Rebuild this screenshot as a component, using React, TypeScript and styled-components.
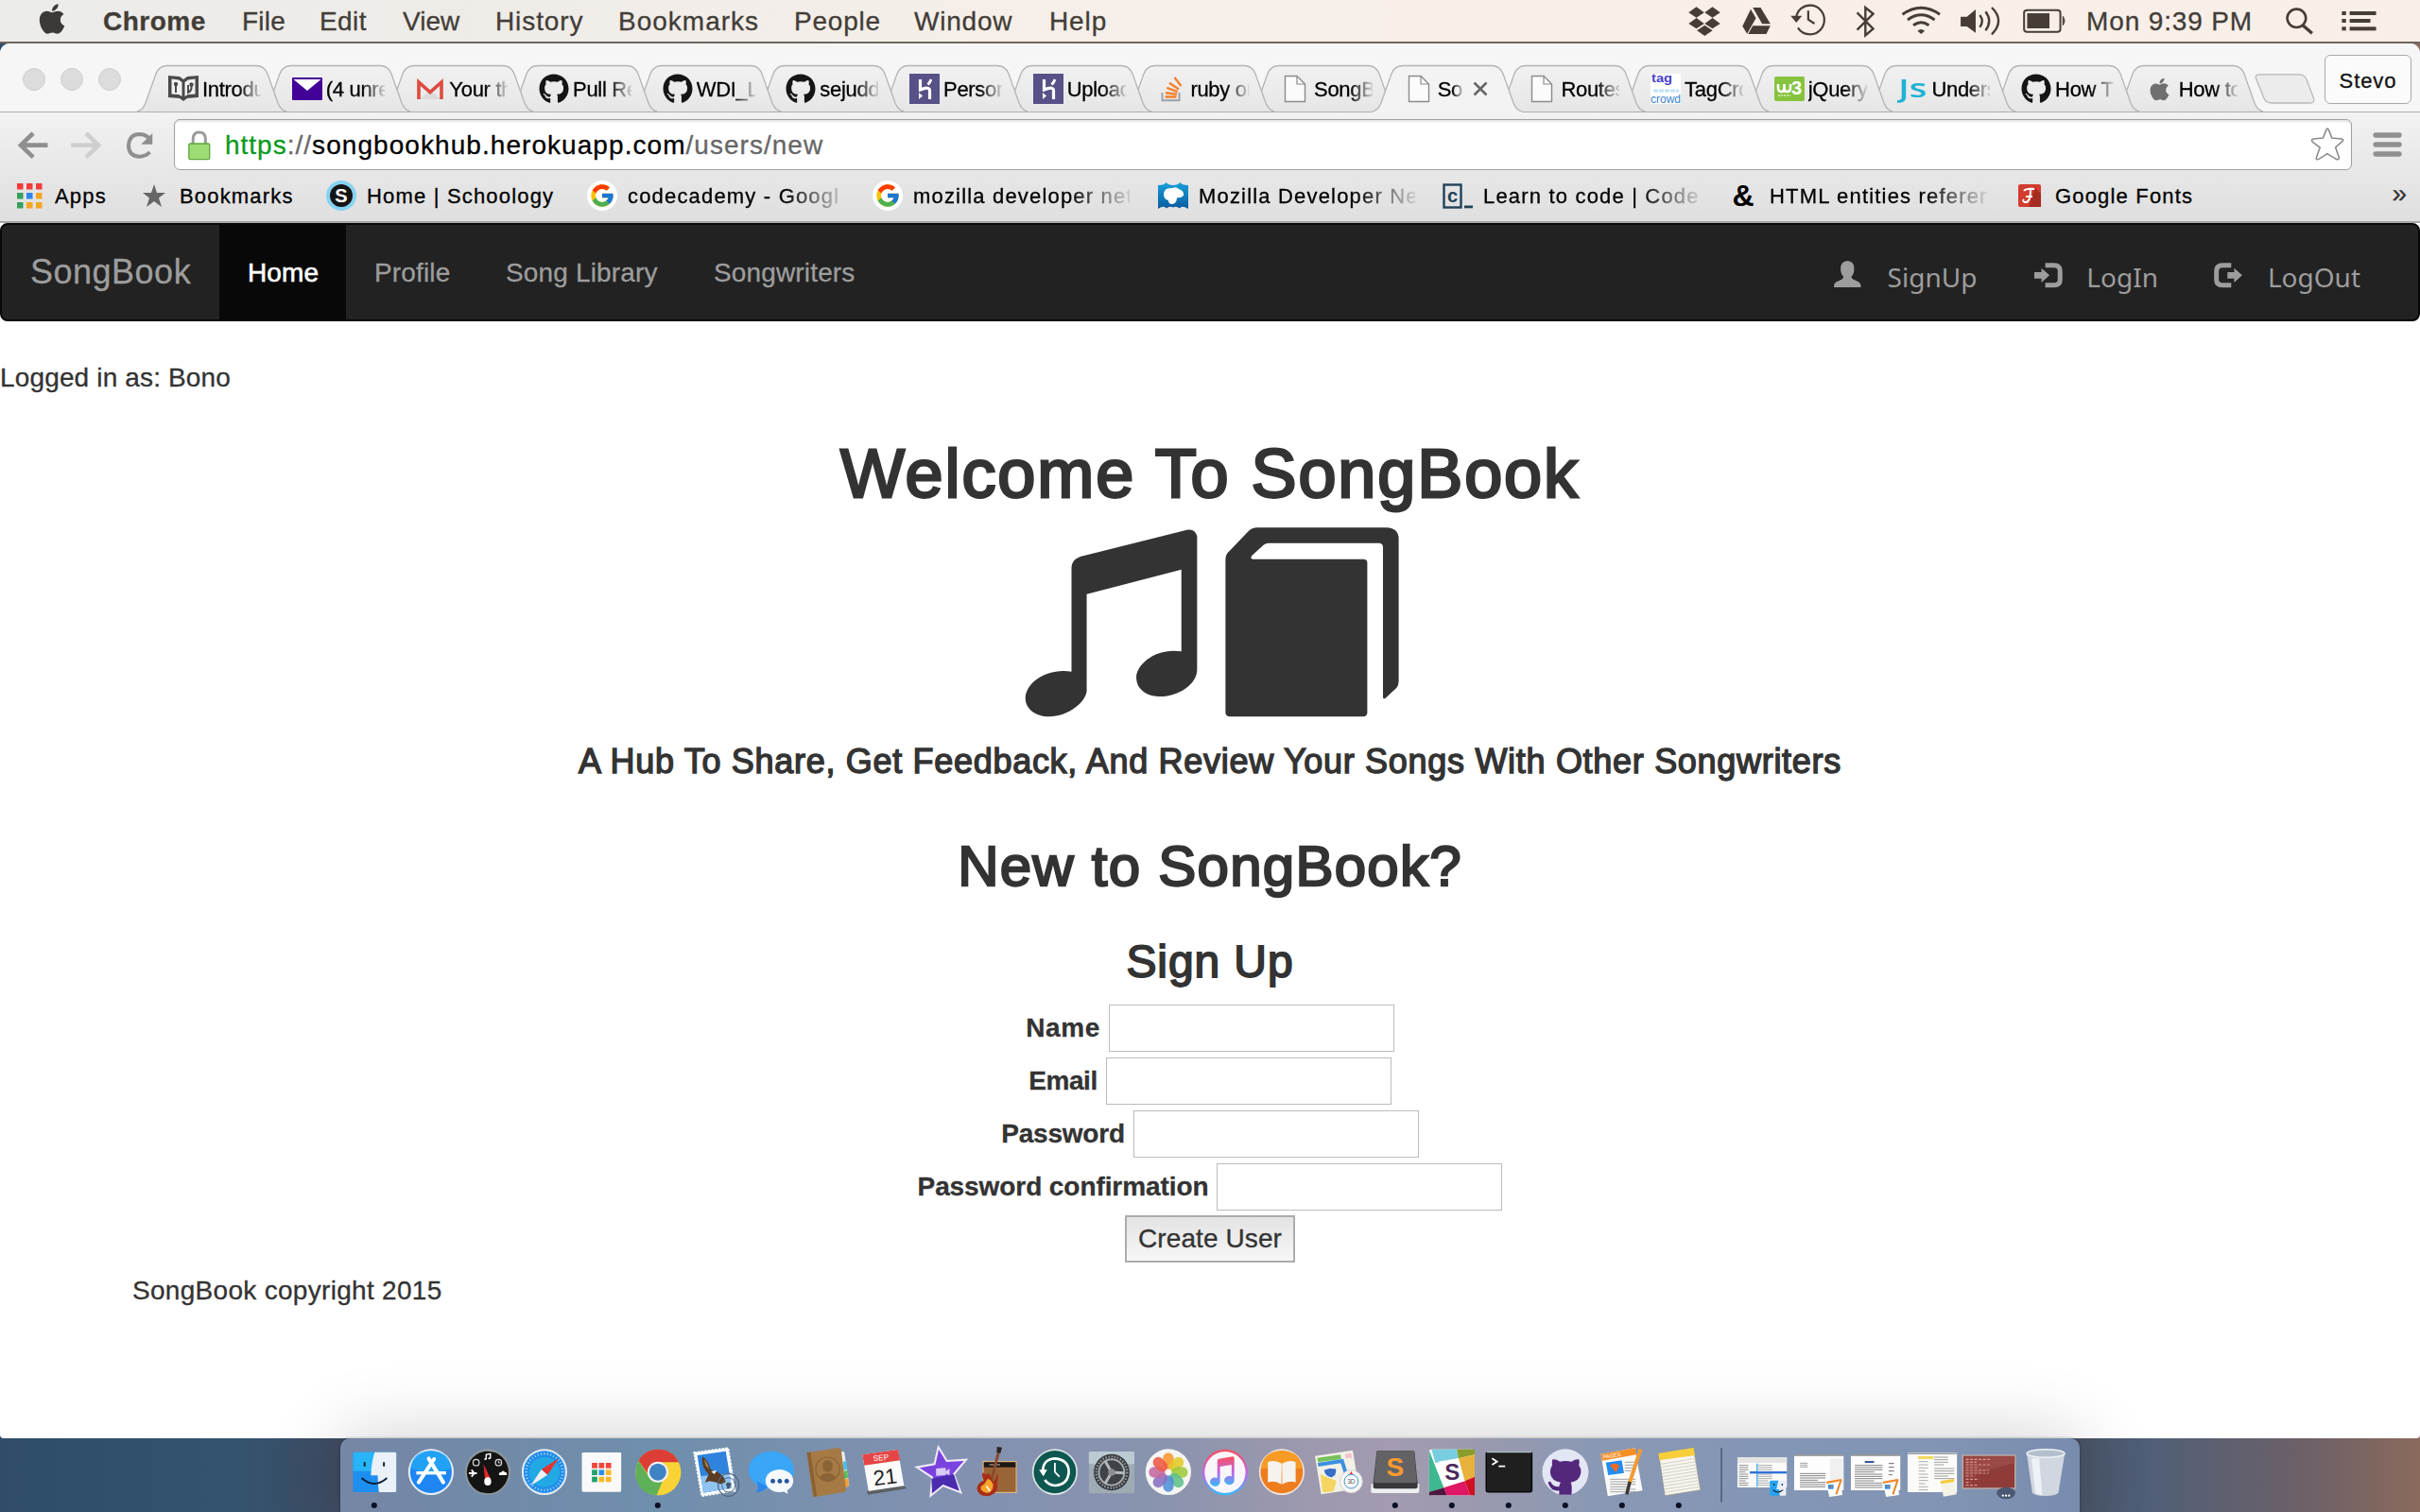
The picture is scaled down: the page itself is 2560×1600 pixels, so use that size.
import React from "react";
import styled, { createGlobalStyle, css } from "styled-components";
import { FaApple, FaGithub } from "react-icons/fa";
import { FcGoogle } from "react-icons/fc";

const sans = `"Liberation Sans", Arial, Helvetica, sans-serif`;

const Global = createGlobalStyle`
  * { box-sizing: border-box; }
  body { margin: 0; background: #3a5068; font-family: ${sans}; color: #333; -webkit-text-stroke-width: 0.3px; }
`;

/* ---------- shared drawing helpers ---------- */

const Drawing = styled.svg`
  display: block;
  flex: none;
  overflow: visible;
  & * {
    vector-effect: non-scaling-stroke;
  }
`;

type ArtProps = {
  x: number;
  y: number;
  w: number;
  h: number;
  kx: number;
  ky?: number;
  children: React.ReactNode;
};

const Art = ({ x, y, w, h, kx, ky = 3, children }: ArtProps) => (
  <Drawing width={w / kx} height={h / ky} viewBox={`${x} ${y} ${w} ${h}`} preserveAspectRatio="none">
    {children}
  </Drawing>
);

type LabelProps = {
  x: number;
  y: number;
  size: number;
  fill: string;
  k?: number;
  weight?: number;
  rotate?: number;
  anchor?: "start" | "middle";
  family?: string;
  children: React.ReactNode;
};

const Label = ({ x, y, size, fill, k = 0.8167, weight = 400, rotate = 0, anchor = "middle", family = sans, children }: LabelProps) => (
  <text
    transform={`translate(${x} ${y}) scale(${k} 1) rotate(${rotate})`}
    fontSize={size}
    fill={fill}
    fontWeight={weight}
    textAnchor={anchor}
    fontFamily={family}
  >
    {children}
  </text>
);

/* ---------- screen ---------- */

const Screen = styled.div`
  width: 2560px;
  height: 1600px;
  overflow: hidden;
  display: flex;
  flex-direction: column;
  background: linear-gradient(90deg, #2f4d68 0, #33536e 250px, #3f4c62 360px, #4a5468 2200px, #4f5f78 2270px, #6b6068 2430px, #8a6a5c 2560px);
`;

/* ---------- macOS menu bar ---------- */

const MenuBar = styled.header`
  flex: none;
  height: 46px;
  display: flex;
  align-items: flex-start;
  background: linear-gradient(90deg, #ececea 0, #efece8 500px, #f6efe9 1100px, #f8efe9 1500px, #f8efe9);
  border-bottom: 2px solid #70655d;
  color: #423d37;
`;

const AppleSlot = styled.div`
  width: 109px;
  height: 44px;
  padding: 2px 0 0 37px;
  font-size: 36px;
  color: #3c3a36;
`;

const MenuItem = styled.span<{ $w: number; $ls: number; $bold?: boolean }>`
  width: ${(p) => p.$w}px;
  font-size: 28px;
  line-height: 45px;
  letter-spacing: ${(p) => p.$ls}px;
  font-weight: ${(p) => (p.$bold ? 700 : 400)};
  white-space: nowrap;
`;

const StatusArea = styled.div`
  display: flex;
  margin-left: auto;
`;

const Clock = styled.span`
  width: 206px;
  padding-left: 11px;
  font-size: 28px;
  line-height: 45px;
  letter-spacing: 0.85px;
  white-space: nowrap;
`;

const MENUS: [string, number, number][] = [
  ["File", 82, 0.2],
  ["Edit", 88, 0.4],
  ["View", 98, 0],
  ["History", 130, 0.9],
  ["Bookmarks", 186, 1],
  ["People", 127, 0.8],
  ["Window", 143, 0.8],
  ["Help", 80, 0.9],
];

const INK = "#463d36";
const MX = 1.8235;

const StatusIcons = () => (
  <>
    <Art x={140} y={0} w={95} h={132} kx={MX}>
      {[[172, 40], [203, 40], [172, 75], [203, 75]].map(([cx, cy]) => (
        <path key={`${cx}${cy}`} d={`M${cx - 15} ${cy} L${cx} ${cy - 18} L${cx + 15} ${cy} L${cx} ${cy + 16}Z`} fill={INK} />
      ))}
      <path d="M173 97 L188 80 L203 97 L188 114Z" fill={INK} />
    </Art>
    <Art x={235} y={0} w={105} h={132} kx={MX}>
      <path d="M277 29 L287 58 L270 107 L261 83Z M281 24 H296 L315 76 H299Z M281 82 H315 L307 108 H272Z" fill={INK} />
    </Art>
    <Art x={340} y={0} w={110} h={132} kx={MX}>
      <path d="M366 54 C368 30 380 17 393 17 C408 17 420 38 420 63 C420 88 408 109 393 109 C383 109 374 101 369 88" fill="none" stroke={INK} strokeWidth="2.2" />
      <path d="M355 50 H377 L366 72Z" fill={INK} />
      <path d="M389 34 V62 L401 75" fill="none" stroke={INK} strokeWidth="2.2" />
    </Art>
    <Art x={450} y={0} w={100} h={132} kx={MX}>
      <path d="M482 40 L513 91 L498 112 V24 L513 44 L482 95" fill="none" stroke={INK} strokeWidth="2.4" />
    </Art>
    <Art x={550} y={0} w={110} h={132} kx={MX}>
      <path d="M571 46 Q607 4 643 46 M581 63 Q607 32 633 63 M592 80 Q607 62 622 80" fill="none" stroke={INK} strokeWidth="3" />
      <path d="M600 98 Q607 88 614 98 L607 108Z" fill={INK} />
    </Art>
    <Art x={660} y={0} w={120} h={132} kx={MX}>
      <path d="M682 53 H694 L711 30 V104 L694 84 H682Z" fill={INK} />
      <path d="M719 48 Q728 67 719 86 M730 37 Q744 67 730 97 M742 24 Q768 65 742 109" fill="none" stroke={INK} strokeWidth="2.4" />
    </Art>
    <Art x={780} y={0} w={125} h={132} kx={MX}>
      <rect x="804" y="32" width="70" height="69" rx="6" ry="8" fill="none" stroke={INK} strokeWidth="2" />
      <rect x="810" y="42" width="43" height="48" fill={INK} />
      <path d="M879 52 Q885 66 879 80Z" fill={INK} stroke={INK} />
    </Art>
    <Clock>Mon 9:39 PM</Clock>
    <Art x={1280} y={0} w={110} h={132} kx={MX}>
      <ellipse cx="1330" cy="58" rx="18" ry="29" fill="none" stroke={INK} strokeWidth="2.6" />
      <path d="M1342 80 L1360 106" stroke={INK} strokeWidth="3.4" />
    </Art>
    <Art x={1390} y={0} w={178} h={132} kx={MX}>
      {[36, 60, 85].map((y, i) => (
        <g key={y} fill={INK}>
          <rect x="1418" y={y} width="8" height="12" />
          <rect x="1433" y={y} width={i === 1 ? 40 : 51} height="12" />
        </g>
      ))}
    </Art>
  </>
);

/* ---------- browser window ---------- */

const Browser = styled.div`
  flex: none;
  height: 1476px;
  display: flex;
  flex-direction: column;
  background: #fff;
  border-radius: 10px 10px 4px 4px;
  overflow: hidden;
`;

const TabStrip = styled.div`
  position: relative;
  z-index: 1;
  flex: none;
  height: 72px;
  display: flex;
  background: #f6f6f6;
  isolation: isolate;
`;

const Lights = styled.div`
  display: flex;
  gap: 16px;
  width: 145px;
  flex: none;
  padding: 26px 0 0 24px;
`;

const Light = styled.i`
  width: 24px;
  height: 24px;
  border-radius: 50%;
  background: #dcdcdc;
  border: 1px solid #cfcfcf;
`;

const TabBox = styled.div<{ $z: number; $first?: boolean }>`
  display: grid;
  flex: none;
  width: 158px;
  height: 49px;
  margin-top: 23px;
  margin-left: ${(p) => (p.$first ? 0 : -27.33)}px;
  z-index: ${(p) => p.$z};
  & > * {
    grid-area: 1 / 1;
  }
`;

const TabBody = styled.div`
  display: flex;
  align-items: center;
  padding: 1px 0 0 33px;
`;

const TabIcon = styled.span`
  width: 32px;
  height: 32px;
  flex: none;
  display: flex;
  align-items: center;
  justify-content: center;
  font-size: 32px;
  color: #161414;
`;

const TabTitle = styled.span<{ $short?: boolean }>`
  width: ${(p) => (p.$short ? 27 : 62)}px;
  margin-left: 4px;
  overflow: hidden;
  white-space: nowrap;
  font-size: 22px;
  line-height: 33px;
  letter-spacing: -0.3px;
  color: #000;
  mask-image: linear-gradient(90deg, #000 ${(p) => (p.$short ? 15 : 38)}px, rgba(0, 0, 0, 0.1) 100%);
`;

const TabClose = styled.span`
  margin-left: 10px;
  display: flex;
`;

const TabShape = ({ active }: { active?: boolean }) => (
  <Drawing width="158" height="49" viewBox="0 0 158 49">
    <defs>
      <linearGradient id="tabfill" x1="0" y1="0" x2="0" y2="1">
        <stop offset="0" stopColor="#f1f1f1" />
        <stop offset="1" stopColor="#e6e6e6" />
      </linearGradient>
    </defs>
    <path
      d={`M0 ${active ? 50.5 : 49} V48.8 C5 48 7 45 9 40 L20 9 C22.500 3 26 .5 32 .5 H126 C132 .5 135.500 3 138 9 L149 40 C151 45 153 48 158 48.800 V${active ? 50.5 : 49}Z`}
      fill={active ? "#f3f3f3" : "url(#tabfill)"}
    />
    <path d="M0 48.800 C5 48 7 45 9 40 L20 9 C22.500 3 26 .5 32 .5 H126 C132 .5 135.500 3 138 9 L149 40 C151 45 153 48 158 48.800" fill="none" stroke="#b4b4b4" strokeWidth="1.3" />
  </Drawing>
);

const DocIcon = () => (
  <svg width="32" height="32" viewBox="0 0 32 32">
    <path d="M5.500 2.500 H18 L26.500 11 V29.500 H5.500Z" fill="#fbfbfb" stroke="#8b8b8b" strokeWidth="1.4" />
    <path d="M18 2.500 V11 H26.500" fill="none" stroke="#8b8b8b" strokeWidth="1.2" />
  </svg>
);

const BookBranchIcon = () => (
  <svg width="32" height="32" viewBox="0 0 32 32">
    <path d="M0 2 L12 3 L16 6 L20 3 L32 2 V25 L20 26 L16 29 L12 26 L0 25Z" fill="#4a4a4a" />
    <path d="M3.500 5.500 L11 6.500 L14.500 9 V24 L11 22 L3.500 21.500Z M28.500 5.500 L21 6.500 L17.500 9 V24 L21 22 L28.500 21.500Z" fill="#f2f2f2" />
    <path d="M8 11 V20 M21 12 V20 Q25 18 24.500 13" fill="none" stroke="#4a4a4a" strokeWidth="2" />
    <circle cx="8" cy="11" r="2.200" fill="#4a4a4a" />
    <circle cx="24.500" cy="11.500" r="2.200" fill="#4a4a4a" />
  </svg>
);

const MailIcon = () => (
  <svg width="32" height="32" viewBox="0 0 32 32">
    <rect y="4" width="32" height="24" rx="1" fill="#430297" />
    <path d="M1.500 6 H30.500 L16 18Z" fill="#fff" />
  </svg>
);

const GmailIcon = () => (
  <svg width="32" height="32" viewBox="0 0 32 32">
    <rect x="3" y="6" width="26" height="21" fill="#ececec" />
    <path d="M4.500 27 L16 17 L27.500 27Z" fill="#dcdcdc" />
    <path d="M4 27 V9 L16 19.500 L28 9 V27" fill="none" stroke="#dd4b3e" strokeWidth="3.600" />
  </svg>
);

const HerokuIcon = () => (
  <svg width="32" height="32" viewBox="0 0 32 32">
    <rect width="32" height="32" fill="#565287" />
    <path d="M11.500 6 V17 Q21.500 13 21.500 18 V27" fill="none" stroke="#fff" strokeWidth="3.200" />
    <path d="M10 20 L14 23.500 L10 27Z" fill="#fff" />
    <path d="M23 6 Q22 9 19.500 11.500" fill="none" stroke="#fff" strokeWidth="2.800" />
  </svg>
);

const StackIcon = () => (
  <svg width="32" height="32" viewBox="0 0 32 32" fill="none">
    <path d="M6.500 20 V28.200 H24.500 V20" stroke="#9aa0a8" strokeWidth="1.900" />
    <path d="M9.500 24.500 H21.500 M10 20.200 L22 21.800 M11.300 14.800 L22.700 19.200 M14 9.800 L24 16.600 M19.500 4 L26.500 13" stroke="#f4802a" strokeWidth="2.400" />
  </svg>
);

const TagCrowdIcon = () => (
  <svg width="32" height="32" viewBox="0 0 32 32">
    <rect width="32" height="32" fill="#fff" />
    <text x="1" y="9" fontSize="13" fontWeight="700" fill="#4a3fd0" fontFamily={sans} textLength="22" lengthAdjust="spacingAndGlyphs">tag</text>
    <path d="M3 18 H30" stroke="#bfe0f5" strokeWidth="3" strokeDasharray="5 1" />
    <text x="0" y="31" fontSize="12" fill="#3e86cf" fontFamily={sans} textLength="32" lengthAdjust="spacingAndGlyphs">crowd</text>
  </svg>
);

const W3Icon = () => (
  <svg width="32" height="32" viewBox="0 0 32 32">
    <rect y="3" width="32" height="26" rx="2" fill="#86c440" />
    <path d="M4 11 V15 Q4 19 7.500 19 Q10.500 19 10.500 15 V11 V15 Q10.500 19 13.500 19 Q17 19 17 15 V11" fill="none" stroke="#fff" strokeWidth="2.600" />
    <text x="18" y="22" fontSize="20" fontWeight="700" fill="#fff" fontFamily={sans}>3</text>
    <path d="M4 23 H17" stroke="#c8e5a5" strokeWidth="2" strokeDasharray="2 1" />
  </svg>
);

const JsIcon = () => (
  <svg width="32" height="32" viewBox="0 0 32 32">
    <text x="1" y="25" fontSize="27" fontWeight="600" fill="#1fb3d6" fontFamily={`"Open Sans", sans-serif`} textLength="30" lengthAdjust="spacingAndGlyphs">Js</text>
  </svg>
);

const CrossIcon = () => (
  <svg width="16" height="16" viewBox="0 0 16 16">
    <path d="M1.500 1.500 L14.500 14.500 M14.500 1.500 L1.500 14.500" stroke="#666" strokeWidth="2.600" />
  </svg>
);

const GreyApple = styled(FaApple)`
  color: #6f6f6f;
  font-size: 27px;
`;

const TABS: { icon: React.ReactNode; title: string; active?: boolean }[] = [
  { icon: <BookBranchIcon />, title: "Introdu" },
  { icon: <MailIcon />, title: "(4 unre" },
  { icon: <GmailIcon />, title: "Your th" },
  { icon: <FaGithub />, title: "Pull Re" },
  { icon: <FaGithub />, title: "WDI_L" },
  { icon: <FaGithub />, title: "sejudd" },
  { icon: <HerokuIcon />, title: "Person" },
  { icon: <HerokuIcon />, title: "Upload" },
  { icon: <StackIcon />, title: "ruby on" },
  { icon: <DocIcon />, title: "SongB" },
  { icon: <DocIcon />, title: "So", active: true },
  { icon: <DocIcon />, title: "Routes" },
  { icon: <TagCrowdIcon />, title: "TagCro" },
  { icon: <W3Icon />, title: "jQuery" },
  { icon: <JsIcon />, title: "Unders" },
  { icon: <FaGithub />, title: "How T" },
  { icon: <GreyApple />, title: "How to" },
];

const NewTab = styled.div`
  flex: none;
  margin: 32px 0 0 -9px;
`;

const ProfileButton = styled.button`
  width: 92px;
  height: 52px;
  margin: 12px 9px 0 auto;
  padding: 4px 0 0;
  border: 1.5px solid #a8a8a8;
  border-radius: 6px;
  background: #fbfbfb;
  font: 22px ${sans};
  letter-spacing: 0.9px;
  color: #111;
  display: flex;
  align-items: center;
  justify-content: center;
  -webkit-text-stroke-width: 0.3px;
`;

const Toolbar = styled.div`
  flex: none;
  height: 118px;
  display: flex;
  flex-direction: column;
  border-top: 1px solid #adadad;
  border-bottom: 2px solid #a8a8a8;
  background: linear-gradient(#f2f2f2, #e8e8e8 50%, #dfdfdf);
`;

const AddressRow = styled.div`
  display: flex;
  height: 61px;
  padding-top: 7px;
`;

const AddressBar = styled.div`
  width: 2304px;
  height: 54px;
  display: flex;
  align-items: center;
  border: 1.5px solid #a0a0a0;
  border-radius: 6px;
  background: #fff;
  box-shadow: inset 0 2px 2px rgba(0, 0, 0, 0.1);
`;

const Url = styled.div`
  flex: 1;
  padding-top: 2px;
  font-size: 28px;
  line-height: 48px;
  letter-spacing: 1.02px;
  white-space: nowrap;
  color: #676767;
`;

const Scheme = styled.span`
  color: #0a9a1c;
`;

const Host = styled.span`
  color: #000;
  letter-spacing: 1.06px;
`;

const BookmarkRow = styled.div`
  display: flex;
  align-items: center;
  height: 54px;
  padding-left: 15px;
`;

const Bookmark = styled.div<{ $w: number }>`
  display: flex;
  align-items: center;
  gap: 11px;
  width: ${(p) => p.$w}px;
  flex: none;
`;

const BookmarkIcon = styled.span`
  width: 32px;
  height: 32px;
  flex: none;
  display: flex;
  align-items: center;
  justify-content: center;
`;

const GoogleDisc = styled.span`
  width: 32px;
  height: 32px;
  border-radius: 50%;
  background: #fff;
  display: flex;
  align-items: center;
  justify-content: center;
  font-size: 28px;
`;

const BookmarkText = styled.span<{ $clip?: boolean }>`
  padding-top: 2px;
  font-size: 22px;
  line-height: 32px;
  letter-spacing: 1.18px;
  white-space: nowrap;
  color: #000;
  ${(p) =>
    p.$clip &&
    css`
      width: 229px;
      overflow: hidden;
      mask-image: linear-gradient(90deg, #000 165px, rgba(0, 0, 0, 0.1) 100%);
    `}
`;

const Overflow = styled.span`
  margin: -4px 14px 0 auto;
  font-size: 28px;
  color: #333;
`;

const AppsIcon = () => (
  <svg width="28" height="28" viewBox="0 0 28 28">
    {["#f03c3c", "#f03c3c", "#f03c3c", "#36a05c", "#2f86ef", "#f5a623", "#36a05c", "#f5a623", "#f5a623"].map((c, i) => (
      <rect key={i} x={1 + (i % 3) * 10} y={1 + Math.floor(i / 3) * 10} width="6.500" height="6.500" fill={c} />
    ))}
  </svg>
);

const BOOKMARKS: { icon: React.ReactNode; text: string; w: number; clip?: boolean }[] = [
  { icon: <AppsIcon />, text: "Apps", w: 132 },
  {
    icon: (
      <svg width="26" height="26" viewBox="0 0 26 26">
        <path d="M13 1 L16 10 L25 10 L18 15.500 L21 25 L13 19 L5 25 L8 15.500 L1 10 L10 10Z" fill="#666" />
      </svg>
    ),
    text: "Bookmarks",
    w: 198,
  },
  {
    icon: (
      <svg width="32" height="32" viewBox="0 0 32 32">
        <circle cx="16" cy="16" r="16" fill="#86d3f3" />
        <circle cx="16" cy="16" r="12" fill="#151515" />
        <text x="16" y="23" textAnchor="middle" fontSize="20" fontWeight="700" fill="#fff" fontFamily={sans}>S</text>
      </svg>
    ),
    text: "Home | Schoology",
    w: 276,
  },
  { icon: <GoogleDisc><FcGoogle /></GoogleDisc>, text: "codecademy - Googl", w: 302, clip: true },
  { icon: <GoogleDisc><FcGoogle /></GoogleDisc>, text: "mozilla developer net", w: 302, clip: true },
  {
    icon: (
      <svg width="32" height="32" viewBox="0 0 32 32">
        <defs>
          <linearGradient id="mdn" x1="0" y1="0" x2="0" y2="1">
            <stop offset="0" stopColor="#18a0da" />
            <stop offset="1" stopColor="#0a5ba0" />
          </linearGradient>
        </defs>
        <path d="M0 5 Q7 5 8.500 2 Q11 5 16 5 Q21 5 23.500 2 Q25 5 32 5 V30 Q25 26 23 29.500 Q19 26.500 16 28.500 Q12 26.500 9 29.500 Q6 26 0 30Z" fill="url(#mdn)" />
        <path d="M6 14 Q7 7 15 8 Q19 6 22 9 Q28 11 27 16 Q24 19 20 18 Q20 24 15 25 Q11 25 11 21 Q6 20 6 14Z" fill="#fff" />
      </svg>
    ),
    text: "Mozilla Developer Ne",
    w: 301,
    clip: true,
  },
  {
    icon: (
      <svg width="32" height="32" viewBox="0 0 32 32">
        <rect x="1.500" y="4.500" width="18" height="24" fill="none" stroke="#1f4259" strokeWidth="2.400" />
        <text x="10.500" y="23" textAnchor="middle" fontSize="20" fontWeight="700" fill="#1f4259" fontFamily={sans}>c</text>
        <rect x="23" y="26.500" width="9" height="2.800" fill="#1f4259" />
      </svg>
    ),
    text: "Learn to code | Code",
    w: 303,
    clip: true,
  },
  {
    icon: (
      <svg width="32" height="32" viewBox="0 0 32 32">
        <text x="15" y="27" textAnchor="middle" fontSize="32" fontWeight="700" fill="#000" fontFamily={sans}>&amp;</text>
      </svg>
    ),
    text: "HTML entities referer",
    w: 302,
    clip: true,
  },
  {
    icon: (
      <svg width="32" height="32" viewBox="0 0 32 32">
        <rect x="4" y="4" width="24" height="24" rx="2" fill="#d23c2f" />
        <path d="M15 28 L22 8 L28 14 V28Z" fill="#a52c22" />
        <path d="M10 11 Q12 8 21 9 M17 9 Q17 24 11 23 Q8 22 10 20 M12 17 H19" fill="none" stroke="#fff" strokeWidth="2" />
      </svg>
    ),
    text: "Google Fonts",
    w: 220,
  },
];

/* ---------- page ---------- */

const Nav = styled.nav`
  flex: none;
  display: flex;
  height: 104px;
  background: #222;
  border: 2px solid #080808;
  border-radius: 8px;
`;

const Brand = styled.a`
  width: 230px;
  padding-left: 30px;
  font-size: 36px;
  line-height: 100px;
  letter-spacing: 0.5px;
  color: #9d9d9d;
`;

const NavLink = styled.a<{ $active?: boolean; $w: number }>`
  width: ${(p) => p.$w}px;
  height: 100px;
  padding-left: 30px;
  font-size: 28px;
  line-height: 101px;
  letter-spacing: 0.15px;
  white-space: nowrap;
  color: ${(p) => (p.$active ? "#fff" : "#9d9d9d")};
  background: ${(p) => (p.$active ? "#080808" : "transparent")};
  ${(p) => p.$active && "-webkit-text-stroke: 0.6px #fff;"}
`;

const NavRight = styled.div`
  display: flex;
  margin-left: auto;
`;

const AuthLink = styled.a<{ $w: number; $gap: number }>`
  display: flex;
  gap: ${(p) => p.$gap}px;
  width: ${(p) => p.$w}px;
  font-family: "Noto Sans", "Open Sans", sans-serif;
  font-size: 28px;
  font-weight: 400;
  line-height: 111px;
  height: 100px;
  color: #9d9d9d;
  white-space: nowrap;
  -webkit-text-stroke-width: 0;
`;

const Main = styled.main`
  flex: 1;
  display: flex;
  flex-direction: column;
  align-items: center;
  font-size: 28px;
`;

const LoggedIn = styled.p`
  align-self: flex-start;
  margin: 40px 0 42px;
  line-height: 40px;
  letter-spacing: 0.15px;
`;

const heading = css`
  margin: 0;
  font-weight: 400;
  white-space: nowrap;
`;

const H1 = styled.h1`
  ${heading}
  height: 79px;
  line-height: 79px;
  font-size: 72px;
  letter-spacing: 1.9px;
  -webkit-text-stroke: 2.8px #333;
`;

const Hero = styled.div`
  display: flex;
  height: 204px;
  margin: 16px 0 25px;
  padding-left: 6px;
`;

const H4 = styled.h4`
  ${heading}
  line-height: 40px;
  font-size: 36px;
  letter-spacing: 0.7px;
  -webkit-text-stroke: 1.4px #333;
`;

const H2 = styled.h2`
  ${heading}
  margin-top: 58px;
  line-height: 66px;
  font-size: 60px;
  letter-spacing: 1.25px;
  -webkit-text-stroke: 2.3px #333;
`;

const H3 = styled.h3`
  ${heading}
  margin: 41px 0 16px;
  line-height: 53px;
  font-size: 48px;
  letter-spacing: 0.9px;
  -webkit-text-stroke: 1.8px #333;
`;

const Field = styled.label<{ $ls: number }>`
  display: flex;
  align-items: center;
  gap: 9px;
  height: 56px;
  font-weight: 700;
  letter-spacing: ${(p) => p.$ls}px;
`;

const Input = styled.input`
  width: 302px;
  height: 50px;
  margin: 0;
  border: 1.5px solid #bcbcbc;
  background: #fff;
`;

const Submit = styled.button`
  width: 180px;
  height: 50px;
  margin-top: 2px;
  padding: 0;
  border: 2px solid #acacac;
  background: linear-gradient(#e3e3e3, #f7f7f7);
  color: #333;
  font: 28px/44px ${sans};
  letter-spacing: 0.1px;
  -webkit-text-stroke-width: 0.3px;
`;

const Footer = styled.footer`
  align-self: flex-start;
  margin: 10px 0 0 140px;
  line-height: 40px;
  letter-spacing: 0.3px;
`;

const FIELDS: [string, number][] = [
  ["Name", 0.6],
  ["Email", -0.45],
  ["Password", -0.2],
  ["Password confirmation", -0.08],
];

const GX = 2.24;
const DIM = "#9d9d9d";

/* ---------- dock ---------- */

const DockArea = styled.div`
  height: 78px;
  flex: none;
  display: flex;
  justify-content: center;
`;

const Dock = styled.div`
  position: relative;
  width: 1840px;
  height: 78px;
  display: flex;
  padding: 0 6px;
  border-radius: 10px 10px 0 0;
  background: linear-gradient(90deg, #7686a5 0, #7289a8 120px, #6f8fac 340px, #7890ad 480px, #8291b1 640px, #8893ae 850px, #9b98ae 1010px, #a49bb0 1110px, #9a9aae 1200px, #8a98b3 1320px, #8496b6 1500px, #8294b3 1700px, #788cae 1840px);
  box-shadow: 0 0 80px rgba(0, 0, 0, 0.2), 0 0 3px rgba(0, 0, 0, 0.35);
`;

const RunningDot = ({ x }: { x: number }) => <ellipse cx={x + 73} cy="339" rx="7.500" ry="9" fill="#0b1026" />;

const DockTile = ({ x, w = 147, running, children }: { x: number; w?: number; running?: boolean; children: React.ReactNode }) => (
  <Art x={x} y={126} w={w} h={234} kx={2.45}>
    {children}
    {running && <RunningDot x={x} />}
  </Art>
);

const SafariTicks = () => (
  <g>
    {Array.from({ length: 36 }, (_, i) => {
      const a = (i * Math.PI) / 18;
      return (
        <line key={i} x1={578 + Math.cos(a) * 44} y1={233 + Math.sin(a) * 54} x2={578 + Math.cos(a) * 51} y2={233 + Math.sin(a) * 62} stroke="#bfe6fb" strokeWidth="0.9" />
      );
    })}
  </g>
);

const PETALS = ["#f79a2e", "#e3c928", "#9fc93a", "#5fc08a", "#4f8fd6", "#8a6fc0", "#c468a0", "#ee5a44"];

const Lines = ({ x, y, w, n, step, color = "#8a8a8a" }: { x: number; y: number; w: number; n: number; step: number; color?: string }) => (
  <g>
    {Array.from({ length: n }, (_, i) => (
      <path key={i} d={`M${x} ${y + i * step} h${i % 4 === 3 ? w * 0.7 : w}`} stroke={color} strokeWidth="0.8" />
    ))}
  </g>
);

const MiniPages = ({ x }: { x: number }) => (
  <g>
    <path d={`M${x} 263 L${x + 38} 255 L${x + 42} 306 L${x + 8} 312Z`} fill="#fff" />
    <path d={`M${x} 263 L${x + 38} 255 L${x + 38} 262 L${x + 1} 270Z`} fill="#f28a2c" />
    <rect x={x + 5} y="273" width="14" height="14" fill="#2f8fe8" />
    <path d={`M${x + 10} 277 h6 l-2 8z`} fill="#f2702c" />
    <path d={`M${x + 39} 256 L${x + 26} 304`} stroke="#e8862a" strokeWidth="2" />
  </g>
);

const DockIcons = () => (
  <>
    {/* Finder */}
    <DockTile x={63.7} running>
      <rect x="82" y="170" width="112" height="127" rx="4" fill="#1e8ff0" />
      <rect x="82" y="170" width="112" height="60" rx="4" fill="#27b4f8" />
      <path d="M138 170 H190 Q194 170 194 174 V293 Q194 297 190 297 H149 Q146 272 146 244 H128 Q130 200 138 170Z" fill="#eaf1f8" />
      <path d="M112 202 V215 M162 202 V215" stroke="#122" strokeWidth="2" />
      <path d="M104 252 Q137 288 170 252" fill="none" stroke="#0b1c33" strokeWidth="1.800" />
    </DockTile>
    {/* App Store */}
    <DockTile x={210.7}>
      <ellipse cx="284" cy="233" rx="59" ry="73" fill="#e8eef4" />
      <ellipse cx="284" cy="233" rx="54" ry="67" fill="#1e86f3" />
      <path d="M231 222 Q236 166 284 166 Q332 166 337 222 Q284 244 231 222Z" fill="#22aef8" opacity=".7" />
      <path d="M246 236 H323" stroke="#fff" strokeWidth="3.400" />
      <path d="M292 192 L252 266 M278 190 L316 266" stroke="#fff" strokeWidth="4" strokeLinecap="round" />
    </DockTile>
    {/* Dashboard */}
    <DockTile x={357.700}>
      <ellipse cx="431" cy="233" rx="59" ry="73" fill="#8f9799" />
      <ellipse cx="431" cy="234" rx="54" ry="67" fill="#141414" />
      <path d="M420 208 L439 256 H424Z" fill="#e8262a" />
      <ellipse cx="431" cy="263" rx="9" ry="13" fill="#fff" />
      <path d="M427 192 V178 L438 175 V190" fill="none" stroke="#fff" strokeWidth="1.400" />
      <circle cx="425" cy="192" r="3" fill="#fff" />
      <circle cx="435" cy="190" r="3" fill="#fff" />
      <ellipse cx="401" cy="203" rx="8" ry="10" fill="none" stroke="#ddd" strokeWidth="1.200" />
      <ellipse cx="459" cy="203" rx="8" ry="10" fill="none" stroke="#ddd" strokeWidth="1.200" />
      <path d="M459 197 V204 H464" fill="none" stroke="#ddd" strokeWidth="1" />
      <path d="M382 237 H403 M389 226 L396 237 L389 248" fill="none" stroke="#fff" strokeWidth="1.800" />
      <path d="M461 243 Q458 234 466 234 Q470 225 475 233 Q483 234 480 243Z" fill="#fff" />
    </DockTile>
    {/* Safari */}
    <DockTile x={504.700}>
      <ellipse cx="578" cy="233" rx="59" ry="73" fill="#e6edf2" />
      <ellipse cx="578" cy="233" rx="54" ry="67" fill="#1f8bea" />
      <ellipse cx="578" cy="233" rx="40" ry="48" fill="#22a9e4" />
      <SafariTicks />
      <path d="M615 190 L570 225 L586 242Z" fill="#e5342f" />
      <path d="M542 277 L570 225 L586 242Z" fill="#eef1f4" />
    </DockTile>
    {/* Launcher */}
    <DockTile x={651.700}>
      <rect x="675" y="171" width="102" height="125" rx="4" fill="#f9f9f9" />
      {["#f0453a", "#f0453a", "#f0453a", "#22a06a", "#2a90e8", "#fbb829", "#22a06a", "#fbb829", "#fbb829"].map((c, i) => (
        <rect key={i} x={701 + (i % 3) * 18} y={204 + Math.floor(i / 3) * 22} width="14" height="17" fill={c} />
      ))}
    </DockTile>
    {/* Chrome */}
    <DockTile x={798.700} running>
      <ellipse cx="873" cy="234" rx="59" ry="73" fill="#f9d336" />
      <path d="M822 197 Q838 161 873 161 Q910 161 926 202 H873 L850 245Z" fill="#dc3d34" />
      <path d="M822 197 L850 250 L884 262 L869 307 Q816 300 814 234 Q814 215 822 197Z" fill="#5fb158" />
      <ellipse cx="872" cy="233" rx="27" ry="33" fill="#f4f4f4" />
      <ellipse cx="872" cy="233" rx="22" ry="27" fill="#3f83c4" />
    </DockTile>
    {/* Mail */}
    <DockTile x={945.700}>
      <path d="M966 172 L1054 157 L1072 292 L986 309Z" fill="#fff" stroke="#fff" strokeWidth="2" strokeDasharray="2.500 1.200" />
      <path d="M974 180 L1048 167 L1064 284 L990 299Z" fill="#2f83dc" />
      <path d="M983 246 L1058 238 L1064 284 L990 299Z" fill="#8fc4f2" />
      <path d="M987 184 Q1003 196 1007 222 L1016 230 Q1040 234 1048 264 Q1034 276 1024 266 L1006 262 L994 266 L1004 240 Q984 220 987 184Z" fill="#5b3c22" />
      <path d="M992 192 Q1002 206 1004 224 L996 212Z" fill="#b08658" />
      <path d="M1010 232 L1024 227 L1019 240Z" fill="#f3f0e6" />
      <ellipse cx="1055" cy="274" rx="27" ry="36" fill="none" stroke="#51657f" strokeWidth="1.200" />
      <ellipse cx="1055" cy="274" rx="17" ry="23" fill="none" stroke="#51657f" strokeWidth="1" />
      <path d="M1048 270 Q1055 262 1062 270 L1058 286 H1052Z" fill="#43566f" />
    </DockTile>
    {/* Messages */}
    <DockTile x={1092.700}>
      <ellipse cx="1166" cy="227" rx="59" ry="60" fill="#3aa6f8" />
      <path d="M1128 262 Q1136 284 1126 299 Q1146 296 1156 280Z" fill="#2a86ee" />
      <ellipse cx="1187" cy="261" rx="36" ry="36" fill="#f5f9fd" />
      <path d="M1192 290 L1209 303 L1206 284Z" fill="#f5f9fd" />
      {[1170, 1188, 1206].map((c) => (
        <ellipse key={c} cx={c} cy="262" rx="6" ry="7.500" fill="#24559e" />
      ))}
    </DockTile>
    {/* Contacts */}
    <DockTile x={1239.700}>
      <path d="M1340 170 L1355 168 L1368 276 L1352 286Z" fill="#eee" />
      <path d="M1352 200 L1361 198 L1362 225 L1353 228Z" fill="#48c0e8" />
      <path d="M1354 230 L1363 228 L1365 252 L1355 255Z" fill="#57c15a" />
      <path d="M1356 256 L1366 254 L1367 278 L1357 282Z" fill="#f0a03a" />
      <path d="M1258 172 L1340 156 Q1346 156 1347 162 L1360 290 Q1360 296 1354 297 L1278 312 Q1274 312 1273 306Z" fill="#a67a45" />
      <path d="M1258 172 L1268 170 L1284 310 L1276 312Z" fill="#8a6233" />
      <ellipse cx="1312" cy="224" rx="31" ry="38" fill="none" stroke="#8a6434" strokeWidth="1.200" />
      <ellipse cx="1312" cy="214" rx="13" ry="19" fill="#8a6434" />
      <path d="M1290 252 Q1296 238 1312 236 Q1328 238 1334 252 Q1312 272 1290 252Z" fill="#8a6434" />
    </DockTile>
    {/* Calendar */}
    <DockTile x={1386.700}>
      <path d="M1414 292 L1512 278 L1516 286 L1416 305Z" fill="#5c6062" />
      <path d="M1402 178 L1494 162 L1510 276 L1418 294Z" fill="#fbfbfb" />
      <path d="M1402 178 L1494 162 L1500 196 L1407 212Z" fill="#e64545" />
      <Label x={1451} y={196} size={25} fill="#fff" rotate={-7}>SEP</Label>
      <Label x={1463} y={272} size={68} fill="#222" rotate={-7}>21</Label>
    </DockTile>
    {/* iMovie */}
    <DockTile x={14.700}>
      <path d="M80 154 L102 198 L152 194 L120 240 L138 298 L92 276 L60 308 L64 250 L24 218 L70 208Z" fill="#7a43e0" stroke="#f1ecf8" strokeWidth="2" />
      <path d="M62 254 L120 240 L134 292 L92 272 L64 300Z" fill="#4a2cae" />
      <path d="M74 222 L99 220 V243 L74 245Z M99 230 L109 222 V244 L99 238Z" fill="#d9ccf5" />
    </DockTile>
    {/* GarageBand */}
    <DockTile x={161.700}>
      <path d="M196 199 L282 200 V298 H196Z" fill="#9a6536" stroke="#d8b480" strokeWidth="1.200" />
      <rect x="198" y="202" width="82" height="16" fill="#1d1715" />
      <path d="M212 210 H240" stroke="#c8c0b4" strokeWidth="1" />
      <path d="M237 165 L216 268" stroke="#8a4a30" strokeWidth="3" />
      <path d="M232 153 L245 155 L241 173 L231 171Z" fill="#2a2320" />
      <path d="M208 238 Q216 238 217 254 L222 264 Q232 256 231 238 Q238 244 232 268 Q238 302 208 310 Q180 308 180 284 Q184 264 198 260 Q190 240 196 234 Q200 246 208 238Z" fill="#a82d18" />
      <path d="M208 254 Q218 258 222 274 Q222 298 206 300 Q188 296 190 280 Q202 270 208 254Z" fill="#f6a42c" />
      <path d="M205 278 L214 294" stroke="#fff" strokeWidth="1.600" />
    </DockTile>
    {/* Time Machine */}
    <DockTile x={308.700}>
      <ellipse cx="382" cy="233" rx="59" ry="73" fill="#dfe5e6" />
      <ellipse cx="382" cy="233" rx="55" ry="68" fill="#0e5751" />
      <path d="M351 240 Q348 192 382 190 Q418 194 418 233 Q416 274 382 276 Q364 274 356 258" fill="none" stroke="#fff" strokeWidth="2.600" />
      <path d="M341 226 L352 247 L362 226Z" fill="#fff" />
      <path d="M382 204 V233 L394 248" fill="none" stroke="#fff" strokeWidth="1.800" />
    </DockTile>
    {/* System Preferences */}
    <DockTile x={455.700}>
      <rect x="470" y="168" width="118" height="133" rx="4" fill="#9fabb4" />
      <rect x="470" y="168" width="118" height="40" rx="4" fill="#bccad2" />
      <ellipse cx="529" cy="234" rx="46" ry="58" fill="#2f3236" />
      <ellipse cx="529" cy="234" rx="40" ry="50" fill="none" stroke="#8d9298" strokeWidth="2.500" strokeDasharray="1.800 1.400" />
      <ellipse cx="529" cy="234" rx="33" ry="41" fill="#3f4246" stroke="#a9adb2" strokeWidth="2" />
      <path d="M529 234 L563 236 M529 234 L512 198 M529 234 L512 270" stroke="#b4b8bc" strokeWidth="3" />
      <ellipse cx="529" cy="234" rx="9" ry="11" fill="#8a8e93" />
    </DockTile>
    {/* Photos */}
    <DockTile x={602.700}>
      <ellipse cx="676" cy="233" rx="59" ry="73" fill="#f5f5f3" />
      <g transform="translate(676 234) scale(.8167 1)">
        {PETALS.map((c, i) => (
          <rect key={c} x="-17" y="-62" width="34" height="52" rx="17" fill={c} opacity=".88" transform={`rotate(${i * 45})`} />
        ))}
        <circle r="5" fill="#fff" />
      </g>
    </DockTile>
    {/* iTunes */}
    <DockTile x={749.700}>
      <defs>
        <linearGradient id="itunes" x1="0" y1="0" x2="0" y2="1">
          <stop offset="0" stopColor="#fb4f5c" />
          <stop offset=".55" stopColor="#b968ee" />
          <stop offset="1" stopColor="#32bdf8" />
        </linearGradient>
      </defs>
      <ellipse cx="823" cy="234" rx="59" ry="73" fill="url(#itunes)" />
      <ellipse cx="823" cy="234" rx="53" ry="66" fill="#f8f6fa" />
      <path d="M803 198 Q803 192 807 191 L843 184 Q847 184 847 189 V260 A13 14 0 1 1 840 247 V210 L810 216 V266 A13 14 0 1 1 803 252Z" fill="url(#itunes)" />
    </DockTile>
    {/* iBooks */}
    <DockTile x={896.700}>
      <ellipse cx="970" cy="233" rx="59" ry="73" fill="#f0e6de" />
      <ellipse cx="970" cy="233" rx="55" ry="68" fill="#ee7d1e" />
      <path d="M916 222 Q922 166 970 166 Q1018 166 1024 222Z" fill="#f79a26" />
      <path d="M970 206 Q950 192 934 202 V266 Q952 258 969 272Z M971 206 Q990 192 1006 202 V266 Q990 258 971 272Z" fill="#f6f3ef" />
    </DockTile>
    {/* Maps */}
    <DockTile x={1043.700}>
      <path d="M1056 182 L1154 164 L1170 286 L1072 304Z" fill="#f3f0e6" />
      <path d="M1062 188 L1122 178 L1124 192 L1064 202Z" fill="#76c25a" />
      <path d="M1134 176 L1150 173 L1152 188 L1136 190Z" fill="#f3c3cf" />
      <path d="M1064 210 L1126 198 L1138 244" fill="none" stroke="#3b8fe0" strokeWidth="4" />
      <path d="M1070 240 L1112 262 L1104 294 L1076 298Z" fill="#f3d560" />
      <path d="M1078 226 Q1095 216 1112 222 Q1114 246 1098 252 Q1080 246 1078 226Z" fill="#3a6fc8" stroke="#fff" />
      <ellipse cx="1150" cy="263" rx="29" ry="36" fill="#f6f6f4" stroke="#d5d5d5" />
      <ellipse cx="1150" cy="263" rx="18" ry="22" fill="#fff" stroke="#3d8fc4" strokeWidth="1" />
      <path d="M1150 230 L1146 240 H1154Z" fill="#e33" />
      <Label x={1150} y={271} size={20} fill="#555">3D</Label>
    </DockTile>
    {/* Sublime Text */}
    <DockTile x={1190.700} running>
      <path d="M1202 270 H1326 V295 Q1326 300 1320 300 H1207 Q1201 300 1201 295Z" fill="#eceef0" />
      <path d="M1216 168 Q1217 165 1221 165 H1309 Q1313 165 1314 168 L1322 268 V280 Q1322 286 1316 286 H1212 Q1207 286 1207 280 V268Z" fill="#38383a" />
      <path d="M1217 166 H1313 L1320 262 Q1320 268 1316 268 H1214 Q1209 268 1209 262Z" fill="#636365" />
      <Label x={1264} y={246} size={84} fill="#fb9a30" weight={700}>S</Label>
    </DockTile>
    {/* Slack */}
    <DockTile x={1337.700} running>
      <path d="M1352 168 Q1352 161 1358 161 H1464 Q1470 161 1470 168 V300 Q1470 307 1464 307 H1358 Q1352 307 1352 300Z" fill="#fff" />
      <path d="M1358 161 H1424 L1428 190 L1368 204 L1358 161Z" fill="#79cde0" />
      <path d="M1424 161 H1470 V178 L1428 190Z" fill="#8a9d2c" />
      <path d="M1352 165 L1390 283 L1352 296Z" fill="#3eb890" />
      <path d="M1428 190 L1470 178 V248 L1444 262Z" fill="#e9b23c" />
      <path d="M1390 283 L1444 262 L1458 307 H1398Z" fill="#e01765" />
      <path d="M1444 262 L1470 248 V307 H1458Z" fill="#cf1023" />
      <path d="M1352 296 L1390 283 L1398 307 H1352Z" fill="#4b1740" />
      <path d="M1376 200 L1428 190 L1444 262 L1393 276Z" fill="#fff" />
      <Label x={1412} y={259} size={72} fill="#4d2a5c" weight={700}>S</Label>
    </DockTile>
    {/* Terminal */}
    <DockTile x={1484.700} running>
      <rect x="1500" y="170" width="118" height="126" rx="4" fill="#1f1f1f" stroke="#080808" strokeWidth="1.500" />
      <path d="M1501 170 H1617" stroke="#b5c3c9" strokeWidth="1.200" />
      <path d="M1515 190 L1528 200 L1515 210 M1532 215 H1549" fill="none" stroke="#fff" strokeWidth="1.800" />
    </DockTile>
    {/* GitHub */}
    <DockTile x={112.700} running>
      <ellipse cx="186" cy="233" rx="60" ry="73" fill="#e3e6f4" />
      <path d="M153 193 Q162 192 172 200 Q186 196 202 200 Q212 192 221 193 Q224 202 221 212 Q228 222 226 238 Q222 262 200 266 Q204 276 202 305 H170 V292 Q150 296 142 270 Q140 262 148 264 Q152 280 170 280 Q170 272 174 266 Q150 262 147 238 Q146 222 152 212 Q150 202 153 193Z" fill="#53277c" />
    </DockTile>
    {/* Pages */}
    <DockTile x={259.700} running>
      <path d="M278 176 L366 157 L386 292 L296 310Z" fill="#fafafa" />
      <path d="M278 176 L366 157 L370 178 L281 197Z" fill="#f58f26" />
      <Label x={307} y={187} size={17} fill="#fff" rotate={-9}>PAGES</Label>
      <path d="M291 203 L332 196 L338 236 L297 243Z" fill="#238cf0" />
      <path d="M302 212 Q312 200 326 212 L317 234Z" fill="#f26a22" />
      <Lines x={340} y={202} w={24} n={4} step={9} />
      <Lines x={302} y={256} w={66} n={6} step={8} />
      <path d="M381 160 L352 270" stroke="#f29a34" strokeWidth="4" />
      <path d="M353 264 L345 304" stroke="#3a3a3a" strokeWidth="3.500" />
    </DockTile>
    {/* Notes */}
    <DockTile x={406.700} running>
      <path d="M428 176 L518 158 L536 290 L444 308Z" fill="#f7f5ee" stroke="#8f8c7c" strokeWidth=".6" />
      <path d="M427 174 L518 156 L522 180 L430 196Z" fill="#f8cf3a" />
      {Array.from({ length: 10 }, (_, i) => (
        <path key={i} d={`M${433 + i * 1.2} ${208 + i * 10} L${524 + i * 1.2} ${190 + i * 10}`} stroke="#c9c6bd" strokeWidth=".8" />
      ))}
    </DockTile>
    {/* Divider */}
    <DockTile x={553.700} w={68.600}>
      <path d="M590.500 156 V329" stroke="#566a86" strokeWidth="2" />
    </DockTile>
    {/* Minimised windows */}
    <DockTile x={622.300}>
      <rect x="632" y="186" width="128" height="96" fill="#fafafa" />
      <rect x="632" y="186" width="128" height="18" fill="#e3e3e3" />
      <Lines x={636} y={212} w={24} n={10} step={7} color="#777" />
      <Lines x={686} y={212} w={36} n={10} step={7} color="#999" />
      <path d="M683 206 V280" stroke="#55b3ee" strokeWidth="1.600" />
      <rect x="664" y="231" width="96" height="7" fill="#2f72d6" />
      <path d="M716 262 Q716 260 719 260 H740 V308 H719 Q716 308 716 305Z" fill="#24a4f4" />
      <path d="M738 260 H756 Q758 260 758 263 V305 Q758 308 755 308 H742 L740 288 H733Z" fill="#e8eff6" />
      <path d="M724 290 Q737 304 750 290" fill="none" stroke="#123" strokeWidth="1.200" />
      <path d="M727 270 V276 M748 270 V276" stroke="#123" strokeWidth="1.200" />
    </DockTile>
    <DockTile x={769.300}>
      <rect x="779" y="178" width="128" height="113" fill="#fdfdfd" />
      <path d="M779 180 H907" stroke="#555" strokeWidth="1.200" />
      <rect x="872" y="190" width="35" height="101" fill="#f0f0f0" />
      <Lines x={794} y={205} w={20} n={3} step={6} />
      <Lines x={794} y={238} w={66} n={7} step={7} color="#666" />
      <MiniPages x={862} />
    </DockTile>
    <DockTile x={916.300}>
      <rect x="926" y="178" width="128" height="113" fill="#fdfdfd" />
      <path d="M926 180 H1054" stroke="#555" strokeWidth="1.200" />
      <path d="M962 201 H986" stroke="#24408e" strokeWidth="1.800" />
      <Lines x={936} y={212} w={72} n={11} step={7} color="#666" />
      <Lines x={1024} y={206} w={14} n={4} step={12} color="#444" />
      <MiniPages x={1009} />
    </DockTile>
    <DockTile x={1063.300}>
      <rect x="1073" y="172" width="128" height="125" fill="#fbfbf9" />
      <path d="M1073 175 H1201" stroke="#999" strokeWidth="1.200" />
      <rect x="1100" y="183" width="40" height="9" fill="#f5d95c" />
      <Lines x={1102} y={200} w={24} n={10} step={10} color="#999" />
      <Lines x={1142} y={186} w={36} n={4} step={8} />
      <Lines x={1142} y={222} w={52} n={5} step={8} />
      <path d="M1158 262 L1192 255 L1200 304 L1166 311Z" fill="#f5f3e8" />
      <path d="M1158 262 L1192 255 L1194 264 L1159 271Z" fill="#f5cb3a" />
    </DockTile>
    <DockTile x={1210.300}>
      <rect x="1216" y="180" width="136" height="105" fill="#8f3b38" stroke="#b9aaa2" strokeWidth="1.600" />
      <path d="M1222 248 L1351 204 V184 H1222Z" fill="#a35450" opacity=".6" />
      <path d="M1224 193 h62 M1224 202 h28 M1224 210 h62 M1224 219 h30 M1224 228 h60 M1224 237 h60 M1224 246 h24 M1224 256 h34 M1224 266 h12 M1224 275 h30" stroke="#d59a94" strokeWidth="1.100" strokeDasharray="3 1.500" />
      <ellipse cx="1328" cy="300" rx="24" ry="19" fill="#4b5872" />
      {[1320, 1328, 1336].map((c) => (
        <ellipse key={c} cx={c} cy="308" rx="2.800" ry="3.400" fill="#fff" />
      ))}
    </DockTile>
    {/* Trash */}
    <DockTile x={1357.300}>
      <path d="M1382 176 L1396 298 Q1400 309 1430 309 Q1460 309 1464 298 L1480 176Z" fill="#d7dce3" opacity=".94" />
      <path d="M1394 190 L1404 300 Q1412 306 1422 307 L1414 190Z" fill="#eef1f5" />
      <ellipse cx="1431" cy="174" rx="49" ry="13" fill="#b4bfce" stroke="#f0f2f5" strokeWidth="1.500" />
    </DockTile>
  </>
);

export default function App() {
  return (
    <>
      <Global />
      <Screen>
        <MenuBar>
          <AppleSlot>
            <FaApple />
          </AppleSlot>
          <MenuItem $w={147} $ls={0.5} $bold>
            Chrome
          </MenuItem>
          {MENUS.map(([text, w, ls]) => (
            <MenuItem key={text} $w={w} $ls={ls}>
              {text}
            </MenuItem>
          ))}
          <StatusArea>
            <StatusIcons />
          </StatusArea>
        </MenuBar>

        <Browser>
          <TabStrip>
            <Lights>
              <Light />
              <Light />
              <Light />
            </Lights>
            {TABS.map((tab, i) => (
              <TabBox key={i} $z={tab.active ? 40 : 30 - i} $first={i === 0}>
                <TabShape active={tab.active} />
                <TabBody>
                  <TabIcon>{tab.icon}</TabIcon>
                  <TabTitle $short={tab.active}>{tab.title}</TabTitle>
                  {tab.active && (
                    <TabClose>
                      <CrossIcon />
                    </TabClose>
                  )}
                </TabBody>
              </TabBox>
            ))}
            <NewTab>
              <Drawing width="64" height="32" viewBox="0 0 64 32">
                <path d="M5 .8 H47 Q53 .8 55 6 L62.500 26 Q64 31 59 31 H18 Q12 31 10 26 L1.500 5 Q.5 .8 5 .8Z" fill="#ececec" stroke="#b8b8b8" strokeWidth="1.300" />
              </Drawing>
            </NewTab>
            <ProfileButton>Stevo</ProfileButton>
          </TabStrip>

          <Toolbar>
            <AddressRow>
              <Art x={0} y={378} w={335} h={162} kx={MX}>
                <path d="M92 461 H42 M64 423 L40 461 L64 499" fill="none" stroke="#8f8f8f" strokeWidth="4.600" />
                <path d="M137 461 H188 M166 423 L190 461 L166 499" fill="none" stroke="#cfcfcf" strokeWidth="4.600" />
                <path d="M289 483 Q281 497 268 497 Q248 494 248 461 Q250 427 268 426 Q281 426 288 440" fill="none" stroke="#8f8f8f" strokeWidth="4" />
                <path d="M294 423 V458 H272Z" fill="#8f8f8f" />
              </Art>
              <AddressBar>
                <Art x={338} y={380} w={97} h={156} kx={MX}>
                  <path d="M373 458 V440 Q373 419 385 419 Q397 419 397 440 V458" fill="none" stroke="#9b9b9b" strokeWidth="3" />
                  <rect x="365" y="455" width="40" height="50" rx="3" ry="4" fill="#9ddc74" stroke="#5da63a" strokeWidth="1.300" />
                </Art>
                <Url>
                  <Scheme>https</Scheme>://<Host>songbookhub.herokuapp.com</Host>/users/new
                </Url>
                <Art x={1350} y={380} w={84} h={156} kx={MX}>
                  <path
                    d="M1388 407 Q1390 407 1391 412 L1397 437 L1416 440 Q1421 443 1417 448 L1404 467 L1411 500 Q1410 508 1405 504 L1388 487 L1372 504 Q1366 508 1367 500 L1374 467 L1360 450 Q1356 443 1361 440 L1380 437 L1386 412 Q1387 407 1388 407Z"
                    fill="#fff"
                    stroke="#8c8c8c"
                    strokeWidth="1.600"
                  />
                </Art>
              </AddressBar>
              <Art x={1436} y={378} w={132} h={162} kx={MX}>
                {[421, 451, 481].map((y) => (
                  <rect key={y} x="1477" y={y} width="55" height="16" rx="5" ry="7" fill="#909090" />
                ))}
              </Art>
            </AddressRow>
            <BookmarkRow>
              {BOOKMARKS.map((b) => (
                <Bookmark key={b.text} $w={b.w}>
                  <BookmarkIcon>{b.icon}</BookmarkIcon>
                  <BookmarkText $clip={b.clip}>{b.text}</BookmarkText>
                </Bookmark>
              ))}
              <Overflow>»</Overflow>
            </BookmarkRow>
          </Toolbar>

          <Nav>
            <Brand>SongBook</Brand>
            <NavLink $active $w={134}>Home</NavLink>
            <NavLink $w={139}>Profile</NavLink>
            <NavLink $w={220}>Song Library</NavLink>
            <NavLink $w={220}>Songwriters</NavLink>
            <NavRight>
              <AuthLink $w={212} $gap={28}>
                <Art x={180} y={54} w={64} h={300} kx={GX}>
                  <path d="M212 168 Q228 170 228 192 Q228 210 222 217 Q220 224 228 228 L240 236 Q244 240 244 252 H180 Q180 240 184 236 L197 228 Q204 224 202 217 Q196 210 196 192 Q196 170 212 168Z" fill={DIM} />
                </Art>
                SignUp
              </AuthLink>
              <AuthLink $w={190} $gap={25}>
                <Art x={653} y={54} w={68} h={300} kx={GX}>
                  <path d="M679 182 H700 Q714 182 714 200 V228 Q714 245 700 245 H679" fill="none" stroke={DIM} strokeWidth="5" />
                  <path d="M653 204 H670 V191 L689 214 L670 237 V224 H653Z" fill={DIM} />
                </Art>
                LogIn
              </AuthLink>
              <AuthLink $w={216} $gap={27}>
                <Art x={1081} y={54} w={67} h={300} kx={GX}>
                  <path d="M1122 182 H1101 Q1087 182 1087 200 V228 Q1087 245 1101 245 H1122" fill="none" stroke={DIM} strokeWidth="5" />
                  <path d="M1113 204 H1129 V191 L1148 214 L1129 237 V224 H1113Z" fill={DIM} />
                </Art>
                LogOut
              </AuthLink>
            </NavRight>
          </Nav>

          <Main>
            <LoggedIn>Logged in as: Bono</LoggedIn>
            <H1>Welcome To SongBook</H1>
            <Hero>
              <Art x={412} y={320} w={378} h={610} kx={1.8667}>
                <path
                  d="M510 455 Q509 421 535 413 L738 331 Q754 326 758 352 V775 C758 820 722 860 685 860 C656 860 638 834 638 800 C638 754 680 704 727 717 V457 L540 535 V843 C538 878 504 924 466 924 C438 924 419 898 419 866 C419 816 462 768 510 781Z"
                  fill="#333"
                />
              </Art>
              <Art x={790} y={320} w={378} h={610} kx={1.8667}>
                <path
                  d="M815 425 Q815 408 823 398 L860 336 Q867 324 878 324 H1133 Q1157 326 1157 360 V812 Q1157 824 1153 832 L1131 865 Q1126 870 1126 862 V386 Q1126 374 1119 373 H901 Q893 373 889 381 L867 413 Q863 423 869 424 H1087 Q1095 424 1095 436 V911 Q1095 923 1087 924 H824 Q815 923 815 911Z"
                  fill="#333"
                />
              </Art>
            </Hero>
            <H4>A Hub To Share, Get Feedback, And Review Your Songs With Other Songwriters</H4>
            <H2>New to SongBook?</H2>
            <H3>Sign Up</H3>
            {FIELDS.map(([text, ls]) => (
              <Field key={text} $ls={ls}>
                {text}
                <Input />
              </Field>
            ))}
            <Submit>Create User</Submit>
            <Footer>SongBook copyright 2015</Footer>
          </Main>
        </Browser>

        <DockArea>
          <Dock>
            <DockIcons />
          </Dock>
        </DockArea>
      </Screen>
    </>
  );
}
